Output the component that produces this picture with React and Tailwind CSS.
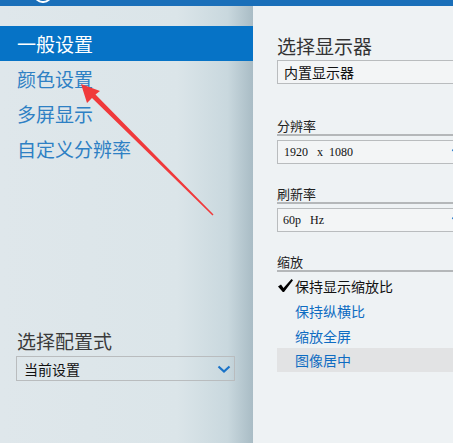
import React from "react";

const CJK = { fontFamily: '"Noto Sans CJK SC", "Noto Sans", sans-serif' };
const SERIF = { fontFamily: '"Liberation Serif", serif' };

function Chevron({ className }) {
  return (
    <svg width="14" height="8" viewBox="0 0 14 8" className={className}>
      <path d="M1.5 1.5 L7 6.5 L12.5 1.5" fill="none" stroke="#1a73c8" strokeWidth="2.2" />
    </svg>
  );
}

function Label({ children }) {
  return (
    <div className="h-[18px] flex items-center text-[13px] text-[#222] leading-none">{children}</div>
  );
}

function Rule() {
  return <div className="h-[2px] bg-[#b4b7b9]" />;
}

function Box({ children, chevron, className = "" }) {
  return (
    <div
      className={`h-[24px] w-[193px] border border-[#b9bcbe] bg-[#f3f5f6] flex items-center justify-between pl-[6px] pr-[4px] ${className}`}
    >
      <div className="flex items-center text-[14px] text-[#111] leading-none whitespace-pre">{children}</div>
      {chevron ? <Chevron /> : null}
    </div>
  );
}

export default function App() {
  const navItems = ["一般设置", "颜色设置", "多屏显示", "自定义分辨率"];
  return (
    <div className="relative w-[453px] h-[443px] overflow-hidden flex flex-col" style={CJK}>
      <div className="relative h-[6px] bg-[#1a6fb9]">
        <div className="absolute left-[34px] top-[-14px] w-[18px] h-[17px] rounded-full border-[2px] border-white" />
      </div>
      <div className="flex flex-1">
        <div className="w-[253px] flex flex-col bg-[linear-gradient(90deg,#dfe7eb_0%,#dbe5e9_70%,#c9d8de_90%,#a9bcc5_100%)]">
          <div className="h-[20px]" />
          {navItems.map((t, i) => (
            <div
              key={t}
              className={`h-[35px] flex items-center pl-[17px] text-[19px] leading-none ${
                i === 0 ? "bg-[#0673c6] text-white" : "text-[#2e80c4]"
              }`}
            >
              {t}
            </div>
          ))}
          <div className="mt-[160px] h-[28px] flex items-center pl-[17px] text-[19px] text-[#3a3a3a] leading-none">
            选择配置式
          </div>
          <div className="mt-[2px] ml-[16px] w-[219px] h-[25px] border border-[#b9bcbe] flex items-center justify-between pl-[7px] pr-[3px]">
            <span className="text-[14px] text-[#111] leading-none">当前设置</span>
            <Chevron />
          </div>
        </div>
        <div className="flex-1 overflow-hidden bg-[#eef2f4] pl-[24px] pt-[25px]">
          <div className="h-[28px] flex items-center text-[19px] text-[#333] leading-none">选择显示器</div>
          <Box className="mt-[1px]">内置显示器</Box>

          <div className="mt-[32px]">
            <Label>分辨率</Label>
            <Rule />
            <Box className="mt-[4px]" chevron>
              <span style={SERIF} className="text-[12px]">1920</span>
              <span style={SERIF} className="text-[12px] ml-[9px]">x</span>
              <span style={SERIF} className="text-[12px] ml-[6px]">1080</span>
            </Box>
          </div>

          <div className="mt-[20px]">
            <Label>刷新率</Label>
            <Rule />
            <Box className="mt-[4px]" chevron>
              <span style={SERIF} className="text-[12px] ml-[-1px]">60p</span>
              <span style={SERIF} className="text-[12px] ml-[9px]">Hz</span>
            </Box>
          </div>

          <div className="mt-[20px]">
            <Label>缩放</Label>
            <Rule />
            <div className="mt-[1px] flex flex-col text-[14px] leading-none">
              <div className="h-[25px] flex items-center">
                <span className="w-[18px] flex items-center">
                  <svg width="17" height="15" viewBox="0 0 17 15">
                    <path d="M1 8.5 L4 6.5 L6.5 10 L14.5 1 L16 2.2 L7 14 L5.8 14 Z" fill="#000" />
                  </svg>
                </span>
                <span className="text-[#111]">保持显示缩放比</span>
              </div>
              <div className="h-[25px] flex items-center pl-[18px] text-[#0e6cc2]">保持纵横比</div>
              <div className="h-[25px] flex items-center pl-[18px] text-[#0e6cc2]">缩放全屏</div>
              <div className="h-[24px] flex items-center pl-[18px] text-[#0e6cc2] bg-[#e2e3e4]">图像居中</div>
            </div>
          </div>
        </div>
      </div>
      <svg className="absolute left-0 top-0 pointer-events-none" width="453" height="443" viewBox="0 0 453 443">
        <polygon
          points="81,84 100,91 95.5,94.5 213.5,214.5 212.5,215.5 92,98 87,103"
          fill="#f0393b"
        />
      </svg>
    </div>
  );
}
